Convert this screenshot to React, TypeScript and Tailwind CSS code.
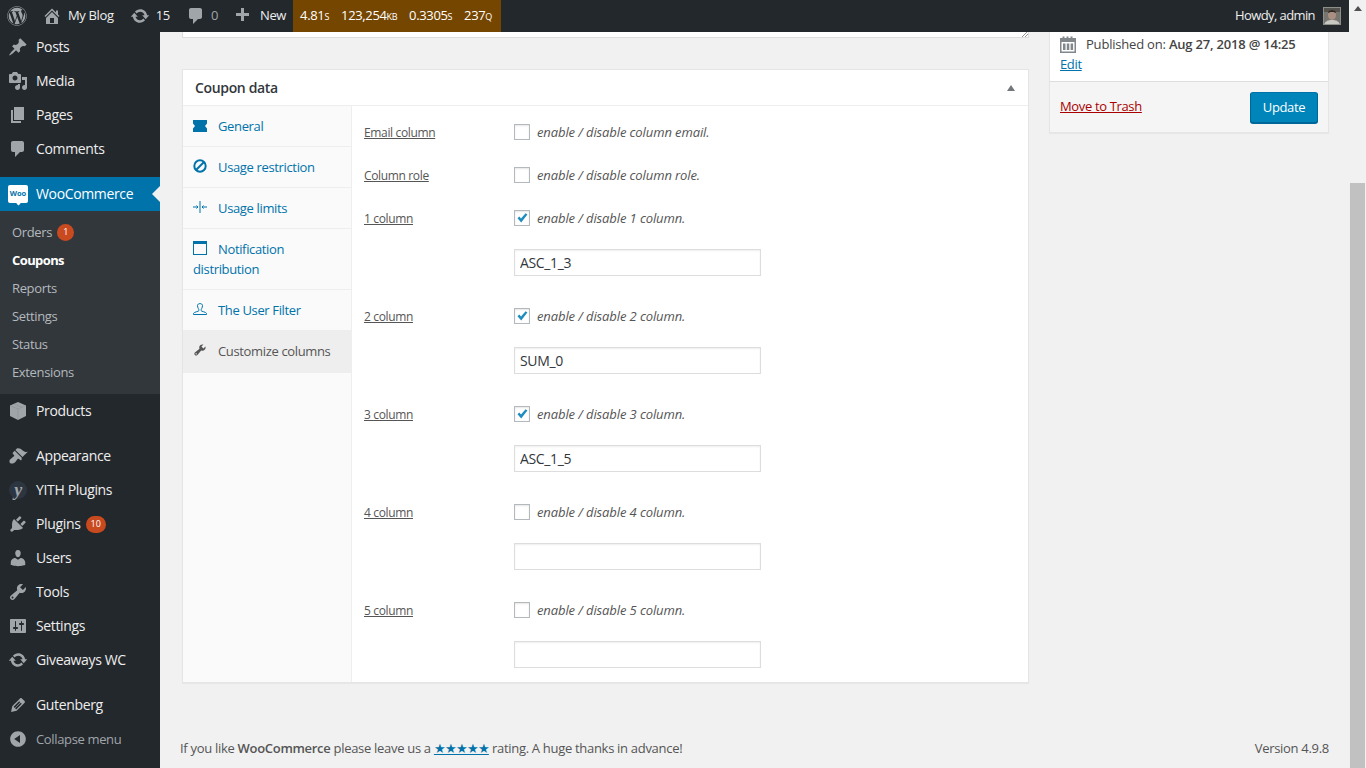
import React from "react";
import { FaWordpress } from "react-icons/fa";

const Dash = ({ d, className }: { d: string; className?: string }) => (
  <svg viewBox="0 0 20 20" className={className} fill="currentColor">
    <path d={d} />
  </svg>
);

const home = "M16 8.5l1.53 1.53-1.06 1.06L10 4.62l-6.47 6.47-1.06-1.06L10 2.5l4 4v-2h2v4zm-6-2.46l6 5.99V18H4v-5.97zM12 17v-5H8v5h4z";
const update = "M10.2 3.28c3.53 0 6.43 2.61 6.92 6h2.08l-3.5 4-3.5-4h2.32c-.45-1.97-2.21-3.45-4.32-3.45-1.45 0-2.73.71-3.54 1.78L4.95 5.66C6.23 4.2 8.11 3.28 10.2 3.28zm-.4 13.44c-3.52 0-6.43-2.61-6.92-6H.8l3.5-4c1.17 1.33 2.33 2.67 3.5 4H5.48c.45 1.97 2.21 3.45 4.32 3.45 1.45 0 2.73-.71 3.54-1.78l1.71 1.95c-1.28 1.46-3.15 2.38-5.25 2.38z";
const comment = "M5 2h9c1.1 0 2 .9 2 2v7c0 1.1-.9 2-2 2h-2l-5 5v-5H5c-1.1 0-2-.9-2-2V4c0-1.1.9-2 2-2z";
const plus = "M17 7v3h-5v5H9v-5H4V7h5V2h3v5h5z";
const post = "M10.44 3.02l1.82-1.82 6.36 6.35-1.83 1.82c-1.05-.68-2.48-.57-3.41.36l-.75.75c-.92.93-1.04 2.35-.35 3.41l-1.83 1.82-2.41-2.41-2.8 2.79c-.42.42-3.38 2.71-3.8 2.29s1.86-3.39 2.28-3.81l2.79-2.79L4.1 9.36l1.83-1.82c1.05.69 2.48.57 3.4-.36l.75-.75c.93-.92 1.05-2.35.36-3.41z";
const media = "M13 11V4c0-.55-.45-1-1-1h-1.67L9 1H5L3.67 3H2c-.55 0-1 .45-1 1v7c0 .55.45 1 1 1h10c.55 0 1-.45 1-1zM7 4.5c1.38 0 2.5 1.12 2.5 2.5S8.38 9.5 7 9.5 4.5 8.38 4.5 7 5.62 4.5 7 4.5zM14 6h5v10.5c0 1.38-1.12 2.5-2.5 2.5S14 17.88 14 16.5s1.12-2.5 2.5-2.5c.17 0 .34.02.5.05V9h-3V6zm-4 8.05V13h2v3.5c0 1.38-1.12 2.5-2.5 2.5S7 17.88 7 16.5 8.12 14 9.5 14c.17 0 .34.02.5.05z";
const page = "M6 15V2h10v13H6zm-1 1h8v2H3V5h2v11z";
const appearance = "M14.48 11.06L7.41 3.99l1.5-1.5c.5-.56 2.3-.47 3.51.32 1.21.8 1.43 1.28 2.91 2.1 1.18.64 2.45 1.26 4.45.85zm-.71.71L6.7 4.7 4.93 6.47c-.39.39-.39 1.02 0 1.41l1.06 1.06c.39.39.39 1.03 0 1.42-.6.6-1.43 1.11-2.21 1.69-.35.26-.7.53-1.01.84C1.43 13.23.96 15.65 2 17c1.35 1.04 3.77.57 5.11-.77.31-.31.58-.66.84-1.01.58-.78 1.09-1.61 1.69-2.21.39-.39 1.03-.39 1.42 0l1.06 1.06c.39.39 1.02.39 1.41 0z";
const plugin = "M13.11 4.36L9.87 7.6 8 5.73l3.24-3.24c.35-.34 1.05-.2 1.56.32.52.51.66 1.21.31 1.55zm-8 1.77l.91-1.12 9.01 9.01-1.19.84c-.71.71-2.63 1.16-3.82 1.16H6.14L4.9 17.26c-.59.59-1.54.59-2.12 0-.59-.58-.59-1.53 0-2.12l1.24-1.24v-3.88c0-1.13.4-3.19 1.09-3.89zm7.26 3.97l3.24-3.24c.34-.35 1.04-.21 1.55.31.52.51.66 1.21.31 1.55l-3.24 3.25z";
const users = "M10 9.25c-2.27 0-2.73-3.44-2.73-3.44C7 4.02 7.82 2 9.97 2c2.16 0 2.98 2.02 2.71 3.81 0 0-.41 3.44-2.68 3.44zm0 2.57L12.72 10c2.39 0 4.52 2.33 4.52 4.53v2.49s-3.65 1.13-7.24 1.13c-3.65 0-7.24-1.13-7.24-1.13v-2.49c0-2.25 1.94-4.48 4.47-4.48z";
const tools = "M16.68 9.77c-1.34 1.34-3.3 1.67-4.95.99l-5.41 6.52c-.99.99-2.59.99-3.58 0s-.99-2.59 0-3.57l6.52-5.42c-.68-1.65-.35-3.61.99-4.95 1.28-1.28 3.12-1.62 4.72-1.06l-2.89 2.89 2.82 2.82 2.86-2.87c.53 1.58.18 3.39-1.08 4.65zM3.81 16.21c.4.39 1.04.39 1.43 0 .4-.4.4-1.04 0-1.43-.39-.4-1.03-.4-1.43 0-.39.39-.39 1.03 0 1.43z";
const settings = "M18 16V4c0-.55-.45-1-1-1H3c-.55 0-1 .45-1 1v12c0 .55.45 1 1 1h14c.55 0 1-.45 1-1zM8 11h1c.55 0 1 .45 1 1s-.45 1-1 1H8v1.5c0 .28-.22.5-.5.5s-.5-.22-.5-.5V13H6c-.55 0-1-.45-1-1s.45-1 1-1h1V5.5c0-.28.22-.5.5-.5s.5.22.5.5V11zm5-2h-1c-.55 0-1-.45-1-1s.45-1 1-1h1V5.5c0-.28.22-.5.5-.5s.5.22.5.5V7h1c.55 0 1 .45 1 1s-.45 1-1 1h-1v5.5c0 .28-.22.5-.5.5s-.5-.22-.5-.5V9z";
const pencil = "M13.89 3.39l2.71 2.72c.46.46.42 1.24.03 1.64l-8.01 8.02-5.56 1.16 1.16-5.58s7.6-7.63 7.99-8.03c.39-.39 1.22-.39 1.68.07zm-2.73 2.79l-5.59 5.61 1.11 1.11 5.54-5.65zm-2.97 8.23l5.58-5.6-1.07-1.08-5.59 5.6z";
const collapse = "M10 2.16c4.33 0 7.84 3.51 7.84 7.84s-3.51 7.84-7.84 7.84S2.16 14.33 2.16 10 5.71 2.16 10 2.16zm2 11.72V6.12L6.18 9.97z";

const ProductIcon = () => (
  <svg viewBox="0 0 20 20" className="w-5 h-5">
    <path d="M10 1l8 3.500V15l-8 4-8-4V4.500z" fill="#a0a5aa" />
    <path d="M2 4.500l8 3.500 8-3.500M10 8v11M6 2.800l8 3.500" fill="none" stroke="#878c91" strokeWidth="0.5" />
  </svg>
);

const MenuItem = ({ icon, label, badge }: { icon: React.ReactNode; label: string; badge?: string }) => (
  <div className="flex items-center h-[34px] pl-[8px] text-[14px] text-[#eee]">
    <span className="w-5 h-5 mr-2 text-[#a0a5aa] flex items-center justify-center">{icon}</span>
    <span className="mb-[2px]">{label}</span>
    {badge && (
      <span className="ml-[5px] h-[17px] min-w-[17px] px-[5px] rounded-full bg-[#ca4a1f] text-white text-[9px] tracking-normal flex items-center justify-center">
        {badge}
      </span>
    )}
  </div>
);

const Sidebar = () => (
  <aside className="w-40 shrink-0 bg-[#23282d] overflow-hidden">
    <div className="-mt-[2px]">
      <MenuItem icon={<Dash d={post} className="w-5 h-5" />} label="Posts" />
      <MenuItem icon={<Dash d={media} className="w-5 h-5" />} label="Media" />
      <MenuItem icon={<Dash d={page} className="w-5 h-5" />} label="Pages" />
      <MenuItem icon={<Dash d={comment} className="w-5 h-5" />} label="Comments" />
    </div>
    <div className="relative mt-[11px] flex items-center h-[34px] pl-[8px] bg-[#0073aa] text-white text-[14px]">
      <span className="relative w-5 h-[18px] mr-2 bg-white rounded-[2px] flex items-center justify-center">
        <span className="text-[#0073aa] text-[7.5px] font-bold tracking-normal leading-none">Woo</span>
        <span className="absolute -bottom-[2px] left-[9px] w-[3px] h-[3px] bg-white rotate-45" />
      </span>
      <span className="mb-[2px]">WooCommerce</span>
      <span className="absolute right-0 top-[9px] border-y-[8px] border-y-transparent border-r-[8px] border-r-[#f1f1f1]" />
    </div>
    <div className="bg-[#32373c] pt-[7px] pb-[8px] text-[13px] text-[#b4b9be]">
      <div className="h-7 pl-3 flex items-center">
        <span className="mt-[2px]">Orders</span>
        <span className="ml-[5px] w-[17px] h-[17px] rounded-full bg-[#ca4a1f] text-white text-[9px] flex items-center justify-center">1</span>
      </div>
      <div className="h-7 pl-3 pt-[2px] flex items-center font-bold text-white tracking-[-0.6px]">Coupons</div>
      <div className="h-7 pl-3 pt-[2px] flex items-center">Reports</div>
      <div className="h-7 pl-3 pt-[2px] flex items-center">Settings</div>
      <div className="h-7 pl-3 pt-[2px] flex items-center">Status</div>
      <div className="h-7 pl-3 pt-[2px] flex items-center">Extensions</div>
    </div>
    <MenuItem icon={<ProductIcon />} label="Products" />
    <div className="mt-[11px]">
      <MenuItem icon={<Dash d={appearance} className="w-5 h-5" />} label="Appearance" />
      <MenuItem
        icon={
          <span className="w-[18px] h-[18px] rounded-full bg-[#2c3540] flex items-center justify-center font-['Liberation_Serif',serif] font-bold italic text-[18px] leading-none text-[#a0a5aa]">
            y
          </span>
        }
        label="YITH Plugins"
      />
      <MenuItem icon={<Dash d={plugin} className="w-5 h-5" />} label="Plugins" badge="10" />
      <MenuItem icon={<Dash d={users} className="w-5 h-5" />} label="Users" />
      <MenuItem icon={<Dash d={tools} className="w-5 h-5" />} label="Tools" />
      <MenuItem icon={<Dash d={settings} className="w-5 h-5" />} label="Settings" />
      <MenuItem icon={<Dash d={update} className="w-5 h-5" />} label="Giveaways WC" />
    </div>
    <div className="mt-[11px]">
      <MenuItem icon={<Dash d={pencil} className="w-5 h-5" />} label="Gutenberg" />
      <div className="flex items-center h-[34px] pl-[8px] text-[13px] text-[#a0a5aa]">
        <Dash d={collapse} className="w-5 h-5 mr-2" />
        <span className="mt-[2px]">Collapse menu</span>
      </div>
    </div>
  </aside>
);

const AdminBar = () => (
  <header className="h-8 shrink-0 bg-[#23282d] flex items-center text-[13px] text-[#eee] relative z-10">
    <FaWordpress className="ml-[7px] w-[20px] h-[20px] text-[#a0a5aa]" />
    <Dash d={home} className="ml-[15px] w-5 h-5 text-[#a0a5aa]" />
    <span className="ml-[6px]">My Blog</span>
    <Dash d={update} className="ml-[16px] w-5 h-5 text-[#a0a5aa]" />
    <span className="ml-[6px]">15</span>
    <Dash d={comment} className="ml-[16px] w-5 h-5 text-[#a0a5aa]" />
    <span className="ml-[5px] text-[#a0a5aa]">0</span>
    <Dash d={plus} className="ml-[14px] w-5 h-5 text-[#a0a5aa]" />
    <span className="ml-[8px]">New</span>
    <div className="ml-[7px] h-8 w-[208px] pl-[7px] bg-[#754600] flex items-center text-white text-[13px] [font-variant:small-caps]">
      <span className="w-[41px]">4.81s</span>
      <span className="w-[68px]">123,254kb</span>
      <span className="w-[55px]">0.3305s</span>
      <span>237q</span>
    </div>
    <span className="ml-auto mr-2 tracking-[-0.6px]">Howdy, admin</span>
    <svg viewBox="0 0 18 18" className="w-[18px] h-[18px] mr-[8px]">
      <rect width="18" height="18" fill="#77756f" />
      <rect x="0" y="0" width="18" height="5" fill="#55534e" />
      <ellipse cx="9" cy="8" rx="4" ry="5" fill="#a98f82" />
      <path d="M5 6c0-4 8-4 8 0-2-1.500-6-1.500-8 0z" fill="#2e2723" />
      <path d="M1 18c1-4 4-5 8-5s7 1 8 5z" fill="#c8c8c2" />
      <rect x="0.500" y="0.500" width="17" height="17" fill="none" stroke="#8f8f8a" />
    </svg>
  </header>
);

const tabs = [
  {
    label: "General",
    icon: (
      <svg viewBox="0 0 14 12" className="inline-block w-[14px] h-[12px] mr-[11px] align-[-1px]" fill="#0073aa">
        <path d="M0 0h14v3.500l-2 2.500 2 2.500V12H0V8.500L2 6 0 3.500z" />
      </svg>
    ),
  },
  {
    label: "Usage restriction",
    icon: (
      <svg viewBox="0 0 14 14" className="inline-block w-[14px] h-[14px] mr-[11px] align-[-1px]" fill="none" stroke="#0073aa" strokeWidth="2">
        <circle cx="7" cy="7" r="5.700" />
        <path d="M3 11L11 3" />
      </svg>
    ),
  },
  {
    label: "Usage limits",
    icon: (
      <svg viewBox="0 0 14 14" className="inline-block w-[14px] h-[14px] mr-[11px] align-[-1px]" fill="none" stroke="#0073aa" strokeWidth="1">
        <path d="M7 1v12M0 7h5M9 7h5M3.500 5.500L5 7 3.500 8.500M10.500 5.500L9 7l1.500 1.500" />
      </svg>
    ),
  },
  {
    label: "Notification distribution",
    icon: (
      <svg viewBox="0 0 14 14" className="inline-block w-[14px] h-[14px] mr-[11px] align-[-1px]" fill="none" stroke="#0073aa">
        <rect x="0.500" y="0.500" width="13" height="13" />
        <rect x="0" y="0" width="14" height="3" fill="#0073aa" stroke="none" />
      </svg>
    ),
  },
  {
    label: "The User Filter",
    icon: (
      <svg viewBox="0 0 14 14" className="inline-block w-[14px] h-[14px] mr-[11px] align-[-1px]" fill="none" stroke="#0073aa">
        <path d="M4.500 3.500C4.500 1 9.500 1 9.500 3.500S8 7 8 8.500c0 1 5.500 1.500 5.500 3v1H.5v-1c0-1.500 5.500-2 5.500-3C6 7 4.500 6 4.500 3.500z" />
      </svg>
    ),
  },
];

const Field = ({ label, desc, checked, value }: { label: string; desc: string; checked?: boolean; value?: string }) => (
  <div>
    <div className="flex items-center h-4">
      <span className="w-[150px] shrink-0 mt-[2px] text-[12px] text-[#555] underline">{label}</span>
      <span className="w-4 h-4 mr-[7px] shrink-0 bg-white border border-[#b4b9be] shadow-[inset_0_1px_2px_rgba(0,0,0,0.1)] flex items-center justify-center">
        {checked && (
          <svg viewBox="0 0 14 14" className="w-[14px] h-[14px]" fill="#1e8cbe">
            <path d="M2.500 7.200L4.300 5.600 6 7.600 10.600 2.200 12.400 3.500 6.200 11.500z" />
          </svg>
        )}
      </span>
      <span className="mt-[1px] text-[13px] italic text-[#555] tracking-[-0.1px]">{desc}</span>
    </div>
    {value !== undefined && (
      <input
        readOnly
        value={value}
        className="block mt-[23px] ml-[150px] w-[247px] h-[27px] px-[5px] text-[14px] text-[#32373c] bg-white border border-[#ddd] shadow-[inset_0_1px_2px_rgba(0,0,0,0.07)] outline-none"
      />
    )}
  </div>
);

const CouponBox = () => (
  <section className="mt-[31px] bg-white border border-[#e5e5e5] shadow-[0_1px_1px_rgba(0,0,0,0.04)]">
    <div className="h-[36px] px-3 flex items-center justify-between border-b border-[#eee]">
      <h2 className="text-[14px] font-semibold text-[#32373c]">Coupon data</h2>
      <span className="mr-[1px] border-x-[4px] border-x-transparent border-b-[6px] border-b-[#72777c]" />
    </div>
    <div className="flex h-[576px]">
      <ul className="w-[169px] shrink-0 bg-[#fafafa] border-r border-[#eee] text-[13px] leading-[20px]">
        {tabs.map((t) => (
          <li key={t.label} className="px-[10px] py-[10px] border-b border-[#eee] text-[#0073aa]">
            {t.icon}
            {t.label}
          </li>
        ))}
        <li className="h-[42px] px-[10px] py-[10px] bg-[#eee] text-[#555]">
          <span className="inline-block mr-[11px] align-[-1px]">
            <Dash d={tools} className="w-[14px] h-[14px] text-[#555]" />
          </span>
          Customize columns
        </li>
      </ul>
      <div className="flex-1 pl-3 pt-[18px] flex flex-col">
        <Field label="Email column" desc="enable / disable column email." />
        <div className="mt-[27px]">
          <Field label="Column role" desc="enable / disable column role." />
        </div>
        <div className="mt-[27px] flex flex-col gap-[32px]">
          <Field label="1 column" desc="enable / disable 1 column." checked value="ASC_1_3" />
          <Field label="2 column" desc="enable / disable 2 column." checked value="SUM_0" />
          <Field label="3 column" desc="enable / disable 3 column." checked value="ASC_1_5" />
          <Field label="4 column" desc="enable / disable 4 column." value="" />
          <Field label="5 column" desc="enable / disable 5 column." value="" />
        </div>
      </div>
    </div>
  </section>
);

const PublishBox = () => (
  <section className="w-[280px] h-[101px] bg-white border border-t-0 border-[#e5e5e5] shadow-[0_1px_1px_rgba(0,0,0,0.04)] flex flex-col text-[13px]">
    <div className="h-[50px] px-[10px] pt-[2px] border-b border-[#ddd] leading-[20px]">
      <div className="flex items-center text-[#444] tracking-[-0.2px]">
        <svg viewBox="0 0 16 18" className="w-4 h-[18px] mr-[10px] text-[#82878c]" fill="currentColor">
          <path d="M0 3h2.500V1.500h2V3h2V1.500h2V3h2V1.500h2V3H16v15H0zM1.500 7v9.500h13V7zM3 8.500h2.500V15H3zM6.800 8.500h2.500V15H6.800zM10.600 8.500h2.500V15h-2.500z" />
        </svg>
        Published on:&nbsp;<b className="font-semibold">Aug 27, 2018 @ 14:25</b>
      </div>
      <a className="text-[#0073aa] underline">Edit</a>
    </div>
    <div className="flex-1 px-[10px] bg-[#f5f5f5] flex items-center justify-between">
      <a className="text-[#a00] underline">Move to Trash</a>
      <button className="h-[31px] w-[68px] pt-[1px] bg-[#0085ba] border border-[#006799] border-t-[#0073aa] rounded-[3px] shadow-[0_1px_0_#006799] text-white text-[13px]">
        Update
      </button>
    </div>
  </section>
);

const Main = () => (
  <main className="flex-1 min-w-0 bg-[#f1f1f1] flex flex-col pl-5 pr-5 overflow-hidden">
    <div className="flex gap-5 pl-[2px]">
      <div className="w-[847px] shrink-0">
        <div className="relative h-[6px] bg-white border-x border-b border-[#ddd]">
          <svg viewBox="0 0 6 6" className="absolute right-0 bottom-0 w-[6px] h-[6px]" stroke="#777" strokeWidth="0.8">
            <path d="M0 6L6 0M3 6l3-3" />
          </svg>
        </div>
        <CouponBox />
      </div>
      <PublishBox />
    </div>
    <footer className="mt-auto h-[40px] pt-[2px] flex items-center justify-between text-[13px] text-[#555] tracking-[-0.3px]">
      <span>
        If you like <b className="font-semibold">WooCommerce</b> please leave us a{" "}
        <a className="text-[#0073aa] underline tracking-[-1px]">★★★★★</a> rating. A huge thanks in advance!
      </span>
      <span>Version 4.9.8</span>
    </footer>
  </main>
);

export default function App() {
  return (
    <div className="flex h-screen overflow-hidden bg-[#f1f1f1] font-['Open_Sans',sans-serif] tracking-[-0.35px]">
      <div className="flex-1 min-w-0 flex flex-col">
        <AdminBar />
        <div className="flex-1 min-h-0 flex">
          <Sidebar />
          <Main />
        </div>
      </div>
      <div className="w-[17px] shrink-0 bg-[#f1f1f1] flex flex-col items-center">
        <span className="mt-[6px] border-x-[4px] border-x-transparent border-b-[5px] border-b-[#505050]" />
        <div className="mt-[172px] w-[15px] flex-1 bg-[#c1c1c1]" />
      </div>
    </div>
  );
}
